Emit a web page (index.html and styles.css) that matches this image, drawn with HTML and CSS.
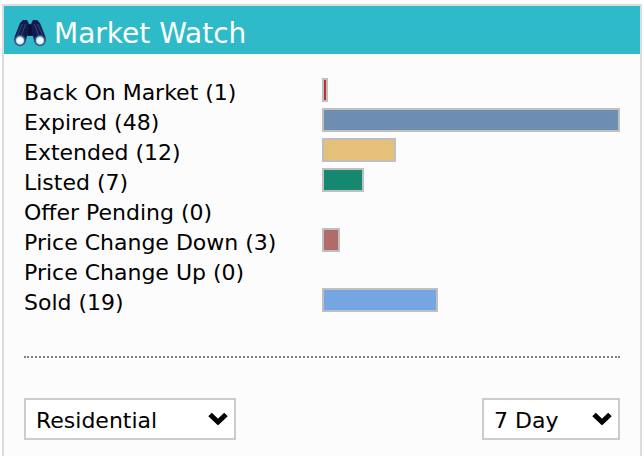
FILE: index.html
```html
<!DOCTYPE html>
<html lang="en">
<head>
    <meta charset="UTF-8">
    <meta name="viewport" content="width=device-width, initial-scale=1.0">
    <title>Market Watch</title>
    <link rel="stylesheet" href="styles.css">
</head>
<body>
    <div class="panel">
        <div class="panel-header">
            <svg class="panel-icon" viewBox="0 0 32 28" aria-hidden="true">
                <defs>
                    <radialGradient id="lens">
                        <stop offset="0" stop-color="#ffffff"/>
                        <stop offset="0.5" stop-color="#e2fbfc"/>
                        <stop offset="1" stop-color="#72bcca"/>
                    </radialGradient>
                </defs>
                <!-- barrels -->
                <path d="M9 0h4l2 4h2l2-4h4l3 3 5.500 14v4l-5 3-6-2-1.500-6h-6l-1.500 6-6 2-5-3v-4l5.500-14z" fill="#101c4d"/>
                <path d="M8.500 4l-5 11M11.500 4l-4 11M23.500 4l5 11M20.500 4l4 11" fill="none" stroke="#2f4a80" stroke-width="1"/>
                <path d="M16 5v10" stroke="#071033" stroke-width="3"/>
                <!-- lenses -->
                <circle cx="6" cy="20.500" r="5" fill="url(#lens)" stroke="#454c85" stroke-width="1.500"/>
                <circle cx="26" cy="20.500" r="5" fill="url(#lens)" stroke="#454c85" stroke-width="1.500"/>
            </svg>
            <h1>Market Watch</h1>
        </div>

        <div class="panel-body">
            <table class="stats">
                <tr>
                    <th scope="row">Back On Market (1)</th>
                    <td><div class="bar back" style="width: 2%"></div></td>
                </tr>
                <tr>
                    <th scope="row">Expired (48)</th>
                    <td><div class="bar expired" style="width: 100%"></div></td>
                </tr>
                <tr>
                    <th scope="row">Extended (12)</th>
                    <td><div class="bar extended" style="width: 24.8%"></div></td>
                </tr>
                <tr>
                    <th scope="row">Listed (7)</th>
                    <td><div class="bar listed" style="width: 14%"></div></td>
                </tr>
                <tr>
                    <th scope="row">Offer Pending (0)</th>
                    <td></td>
                </tr>
                <tr>
                    <th scope="row">Price Change Down (3)</th>
                    <td><div class="bar down" style="width: 6%"></div></td>
                </tr>
                <tr>
                    <th scope="row">Price Change Up (0)</th>
                    <td></td>
                </tr>
                <tr>
                    <th scope="row">Sold (19)</th>
                    <td><div class="bar sold" style="width: 39%"></div></td>
                </tr>
            </table>

            <form class="filters">
                <div class="select-box type">
                    <select aria-label="Property type">
                        <option>Residential</option>
                    </select>
                    <svg class="chevron" viewBox="0 0 20 12" aria-hidden="true"><path d="M2 1.500l8 7.500 8-7.500"/></svg>
                </div>
                <div class="select-box period">
                    <select aria-label="Period">
                        <option>7 Day</option>
                    </select>
                    <svg class="chevron" viewBox="0 0 20 12" aria-hidden="true"><path d="M2 1.500l8 7.500 8-7.500"/></svg>
                </div>
            </form>
        </div>
    </div>
</body>
</html>
```
FILE: styles.css
```css
* {
    box-sizing: border-box;
}

body {
    margin: 0;
    padding: 4px 2px 0;
    background: #fff;
    color: #000;
    font-family: Verdana, "DejaVu Sans", sans-serif;
    font-size: 22px;
}

.panel {
    border: 2px solid #dcdcdc;
    border-bottom: none;
    background: #fcfcfc;
}

.panel-header {
    display: flex;
    align-items: center;
    gap: 8px;
    height: 48px;
    padding: 8px 10px 0;
    background: #2ebac8;
    color: #fff;
}

.panel-icon {
    width: 32px;
    height: 28px;
}

h1 {
    margin: 0;
    font-size: 28px;
    font-weight: normal;
    line-height: 40px;
}

.panel-body {
    padding: 24px 20px 16px;
}

.stats {
    width: 100%;
    table-layout: fixed;
    border-collapse: collapse;
}

.stats th,
.stats td {
    height: 30px;
    padding: 0;
    vertical-align: top;
    text-align: left;
    font-weight: normal;
    line-height: 30px;
    white-space: nowrap;
}

.bar {
    height: 24px;
    border: 2px solid #bfbfbf;
}

.back { background: #b83238; }
.expired { background: #6d8db3; }
.extended { background: #e5c07b; }
.listed { background: #15886f; }
.down { background: #b26b6b; }
.sold { background: #76a5e3; }

.filters {
    display: flex;
    justify-content: space-between;
    margin-top: 38px;
    padding-top: 40px;
    border-top: 2px dotted #808080;
}

.select-box {
    position: relative;
}

.type {
    width: 212px;
}

.period {
    width: 138px;
}

select {
    display: block;
    width: 100%;
    height: 42px;
    padding: 2px 10px 0;
    border: 2px solid #ccc;
    border-radius: 0;
    background: #fff;
    color: #000;
    font: inherit;
    appearance: none;
}

/* Arrow drawn over the select */
.chevron {
    position: absolute;
    top: 15px;
    right: 8px;
    width: 20px;
    height: 12px;
    fill: none;
    stroke: #000;
    stroke-width: 5;
    pointer-events: none;
}
```
